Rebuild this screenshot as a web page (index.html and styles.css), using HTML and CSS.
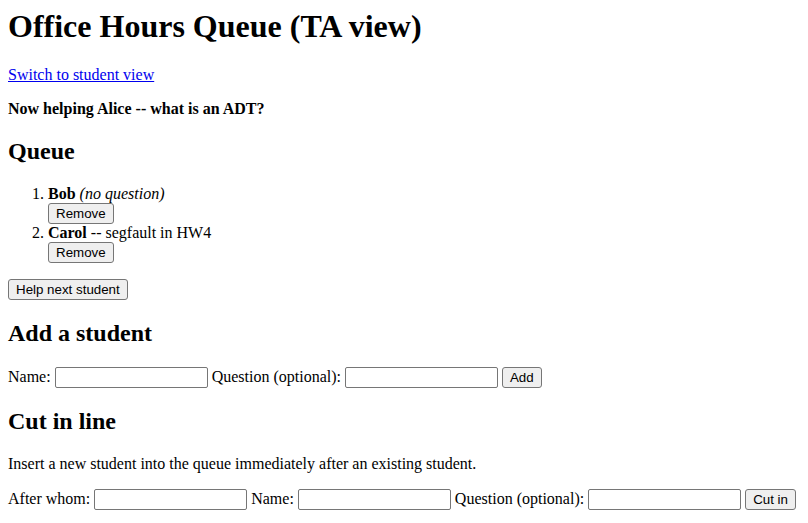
FILE: index.html
```html
<!DOCTYPE html>
<html lang="en">
<head>
  <meta charset="UTF-8">
  <title>Office Hours Queue (TA view)</title>
  <link rel="stylesheet" href="styles.css">
</head>
<body>
  <h1>Office Hours Queue (TA view)</h1>
  <p><a href="#">Switch to student view</a></p>
  <p><strong>Now helping Alice -- what is an ADT?</strong></p>

  <h2>Queue</h2>
  <ol>
    <li><strong>Bob</strong> <em>(no question)</em><br><button>Remove</button></li>
    <li><strong>Carol</strong> -- segfault in HW4<br><button>Remove</button></li>
  </ol>
  <button>Help next student</button>

  <h2>Add a student</h2>
  <form>
    Name: <input type="text"> Question (optional): <input type="text"> <button type="button">Add</button>
  </form>

  <h2>Cut in line</h2>
  <p>Insert a new student into the queue immediately after an existing student.</p>
  <form>
    After whom: <input type="text"> Name: <input type="text"> Question (optional): <input type="text"> <button type="button">Cut in</button>
  </form>
</body>
</html>
```

FILE: styles.css
```css
body {
  font-family: "Liberation Serif", "Times New Roman", serif;
  font-size: 16px;
  color: #000;
}
h1 { margin-top: 0; }
a { color: #0000ee; }
button {
  font-family: "Liberation Sans", Arial, sans-serif;
  font-size: 13.33px;
  padding: 2px 7px;
  border: 1px solid #767676;
  border-radius: 3px;
  background: #efefef;
  color: #000;
}
input[type="text"] {
  width: 147px;
  height: 17px;
  padding: 1px 2px;
  border: 1px solid #767676;
  border-radius: 2px;
  font-size: 13.33px;
}
```
